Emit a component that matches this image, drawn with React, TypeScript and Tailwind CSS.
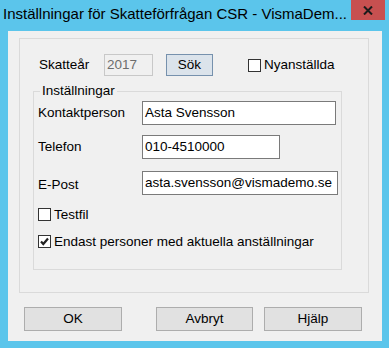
import React from 'react';

const ui = { fontFamily: '"Liberation Sans", Arial, sans-serif' };

function CheckBox({ checked, label }: { checked?: boolean; label: string }) {
  return (
    <div className="flex items-center h-[14px]">
      <div className="w-[13px] h-[13px] border border-[#333333] bg-white flex items-center justify-center">
        {checked && (
          <svg width="11" height="11" viewBox="0 0 11 11">
            <path d="M2 5.5 L4.3 8 L9 2.5" fill="none" stroke="#222" strokeWidth="2.2" />
          </svg>
        )}
      </div>
      <span className="ml-[3px] text-[13.5px] leading-none">{label}</span>
    </div>
  );
}

function WinButton({ label, className = '' }: { label: string; className?: string }) {
  return (
    <button className={`h-[24px] border border-[#adadad] bg-[#e1e1e1] text-[13.5px] text-black ${className}`}>
      {label}
    </button>
  );
}

function TextBox({ value, width }: { value: string; width: string }) {
  return (
    <div className={`${width} h-[24px] border border-[#7a7a7a] bg-white pl-[2px] flex items-center text-[13.5px] leading-none whitespace-nowrap overflow-hidden`}>
      {value}
    </div>
  );
}

export default function App() {
  return (
    <div className="w-[389px] h-[348px] bg-[#5bc5eb] flex flex-col text-black" style={ui}>
      {/* Title bar */}
      <div className="h-[31px] flex items-start">
        <span className="pl-[3px] pt-[5px] text-[15px] leading-[18px] text-black whitespace-nowrap">
          Inställningar för Skatteförfrågan CSR - VismaDem...
        </span>
        <div className="ml-auto mr-[4px] w-[34px] h-[20px] bg-[#c75050] flex items-center justify-center">
          <svg width="10" height="9" viewBox="0 0 10 9">
            <path d="M1 0.5 L9 8.5 M9 0.5 L1 8.5" stroke="#1b1b1b" strokeWidth="2" />
          </svg>
        </div>
      </div>

      {/* Client area */}
      <div className="ml-[8px] mr-[7px] h-[310px] bg-[#f0f0f0] flex flex-col">
        <div className="mt-[7px] ml-[11px] w-[350px] h-[255px] border border-[#dadada] flex flex-col">
          {/* Year row */}
          <div className="mt-[15px] flex items-center h-[22px]">
            <span className="ml-[19px] w-[65px] text-[13.5px]">Skatteår</span>
            <div className="w-[49px] h-[22px] border border-[#c8c8c8] bg-[#f0f0f0] pl-[2px] flex items-center text-[13.5px] text-[#6d6d6d]">
              2017
            </div>
            <button className="ml-[13px] w-[47px] h-[22px] border border-[#7691ad] bg-[#dbe3eb] text-[13.5px]">Sök</button>
            <div className="ml-[35px]">
              <CheckBox label="Nyanställda" />
            </div>
          </div>

          {/* Inställningar group */}
          <div className="relative mt-[15px] ml-[13px] w-[309px] h-[179px] border border-[#dadada] flex flex-col">
            <span className="absolute left-[6px] top-[-9px] px-[2px] bg-[#f0f0f0] text-[13.5px] leading-[16px]">
              Inställningar
            </span>
            <div className="mt-[9px] flex items-center">
              <span className="ml-[4px] w-[104px] text-[13.5px]">Kontaktperson</span>
              <TextBox value="Asta Svensson" width="w-[194px]" />
            </div>
            <div className="mt-[10px] flex items-center">
              <span className="ml-[4px] w-[104px] text-[13.5px]">Telefon</span>
              <TextBox value="010-4510000" width="w-[138px]" />
            </div>
            <div className="mt-[12px] flex items-center">
              <span className="ml-[4px] w-[104px] text-[13.5px] pt-[4px]">E-Post</span>
              <TextBox value="asta.svensson@vismademo.se" width="w-[196px]" />
            </div>
            <div className="mt-[12px] ml-[4px]">
              <CheckBox label="Testfil" />
            </div>
            <div className="mt-[13px] ml-[4px]">
              <CheckBox checked label="Endast personer med aktuella anställningar" />
            </div>
          </div>
        </div>

        {/* Buttons */}
        <div className="mt-[14px] flex">
          <WinButton label="OK" className="ml-[16px] w-[98px]" />
          <WinButton label="Avbryt" className="ml-[34px] w-[97px]" />
          <WinButton label="Hjälp" className="ml-[11px] w-[98px]" />
        </div>
      </div>
    </div>
  );
}
